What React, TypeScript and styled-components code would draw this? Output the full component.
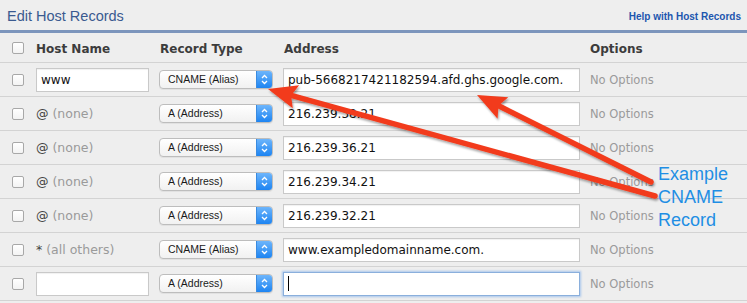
import React from 'react';
import styled, { createGlobalStyle } from 'styled-components';

const GlobalStyle = createGlobalStyle`
    body {
        margin: 0;
        background: #eeeeee;
        font-family: "DejaVu Sans", Verdana, sans-serif;
    }
`;

const Panel = styled.div`
    position: relative;
    width: 747px;
    height: 303px;
    overflow: hidden;
    background: #eeeeee;
`;
const TitleBar = styled.div`
    display: flex;
    align-items: center;
    justify-content: space-between;
    height: 30px;
    padding: 0 6px 0 7px;
    border-bottom: 3px solid #7c95bc;
`;
const Title = styled.span`
    font-family: "Liberation Sans", Arial, sans-serif;
    font-size: 14.5px;
    color: #3a5a90;
    padding-top: 1px;
`;
const HelpLink = styled.a`
    font-family: "Liberation Sans", Arial, sans-serif;
    font-size: 10px;
    font-weight: bold;
    color: #1d56ae;
    text-decoration: none;
    padding-top: 3px;
`;
const Row = styled.div<{ $head?: boolean }>`
    display: grid;
    grid-template-columns: 24px 123px 124px 307px 1fr;
    align-items: center;
    height: ${(p) => (p.$head ? '29px' : '33px')};
    padding-left: 12px;
    border-bottom: 1px solid #d3d3d3;
`;
const HeadCell = styled.span`
    font-size: 12px;
    font-weight: bold;
    color: #3c3c3c;
    padding-top: 2px;
`;
const Check = styled.span`
    display: block;
    width: 10px;
    height: 10px;
    border: 1px solid #a8a8a8;
    border-radius: 2px;
    background: linear-gradient(#ffffff, #f3f3f3);
`;
const Field = styled.div<{ $width: number; $focus?: boolean }>`
    box-sizing: border-box;
    width: ${(p) => p.$width}px;
    height: 24px;
    display: flex;
    align-items: center;
    padding-left: 4px;
    background: #fff;
    border: 1px solid ${(p) => (p.$focus ? '#8aafdc' : '#c9c9c9')};
    box-shadow: ${(p) => (p.$focus ? '0 0 2px 1px #a9c6ec' : 'inset 0 1px 1px rgba(0,0,0,0.06)')};
    font-size: 12px;
    color: #111;
    white-space: nowrap;
    overflow: hidden;
`;
const Caret = styled.span`
    width: 1px;
    height: 15px;
    background: #000;
`;
const HostText = styled.span`
    font-size: 12.5px;
    color: #444;
`;
const Muted = styled.span`
    color: #9a9a9a;
`;
const Select = styled.div`
    box-sizing: border-box;
    width: 114px;
    height: 19px;
    display: flex;
    align-items: center;
    justify-content: space-between;
    border: 1px solid #bdbdbd;
    border-radius: 4px;
    background: linear-gradient(#ffffff, #f1f1f1);
    box-shadow: 0 1px 0 rgba(0, 0, 0, 0.05);
    overflow: hidden;
    font-family: "Liberation Sans", Arial, sans-serif;
    font-size: 10.5px;
    color: #1a1a1a;
`;
const SelectLabel = styled.span`
    padding-left: 8px;
    padding-bottom: 1px;
`;
const SelectButton = styled.span`
    width: 15px;
    height: 100%;
    display: flex;
    align-items: center;
    justify-content: center;
    background: linear-gradient(#6db5fb, #1d84f2);
    border-left: 1px solid #3a8be0;
`;
const Options = styled.span`
    font-size: 11.5px;
    color: #9a9a9a;
    padding-top: 1px;
`;
const Overlay = styled.svg`
    position: absolute;
    left: 0;
    top: 0;
    pointer-events: none;
`;
const Note = styled.div`
    position: absolute;
    left: 658px;
    top: 163px;
    font-family: "Liberation Sans", Arial, sans-serif;
    font-size: 18px;
    line-height: 23px;
    color: #1f8ee4;
`;

interface IRecord {
    host: React.ReactNode;
    type: string;
    address: string;
}

const records: IRecord[] = [
    { host: <Field $width={113}>www</Field>, type: 'CNAME (Alias)', address: 'pub-5668217421182594.afd.ghs.google.com.' },
    { host: <HostText>@ <Muted>(none)</Muted></HostText>, type: 'A (Address)', address: '216.239.38.21' },
    { host: <HostText>@ <Muted>(none)</Muted></HostText>, type: 'A (Address)', address: '216.239.36.21' },
    { host: <HostText>@ <Muted>(none)</Muted></HostText>, type: 'A (Address)', address: '216.239.34.21' },
    { host: <HostText>@ <Muted>(none)</Muted></HostText>, type: 'A (Address)', address: '216.239.32.21' },
    { host: <HostText>* <Muted>(all others)</Muted></HostText>, type: 'CNAME (Alias)', address: 'www.exampledomainname.com.' },
];

function Chevrons() {
    return (
        <svg width="7" height="11" viewBox="0 0 7 11">
            <path d="M1 4 L3.5 1.5 L6 4 M1 7 L3.5 9.5 L6 7" fill="none" stroke="#fff" strokeWidth="1.3" />
        </svg>
    );
}

function TypeSelect({ label }: { label: string }) {
    return (
        <Select>
            <SelectLabel>{label}</SelectLabel>
            <SelectButton>
                <Chevrons />
            </SelectButton>
        </Select>
    );
}

// arrow drawn from tail to tip, head built along the line direction
function Arrow({ from, to }: { from: [number, number]; to: [number, number] }) {
    const dx = to[0] - from[0];
    const dy = to[1] - from[1];
    const len = Math.hypot(dx, dy);
    const ux = dx / len;
    const uy = dy / len;
    const nx = -uy;
    const ny = ux;
    const L = 29;
    const W = 12;
    const bx = to[0] - ux * L;
    const by = to[1] - uy * L;
    const head = [
        [to[0], to[1]],
        [bx + nx * W, by + ny * W],
        [bx + ux * 5, by + uy * 5],
        [bx - nx * W, by - ny * W],
    ]
        .map((p) => p.join(','))
        .join(' ');
    return (
        <g>
            <line x1={from[0]} y1={from[1]} x2={bx + ux * 6} y2={by + uy * 6} stroke="#f23b1c" strokeWidth="5.5" strokeLinecap="round" />
            <polygon points={head} fill="#f23b1c" />
        </g>
    );
}

function App() {
    return (
        <>
            <GlobalStyle />
            <Panel>
                <TitleBar>
                    <Title>Edit Host Records</Title>
                    <HelpLink href="#">Help with Host Records</HelpLink>
                </TitleBar>
                <Row $head>
                    <Check />
                    <HeadCell>Host Name</HeadCell>
                    <HeadCell style={{ paddingLeft: 1 }}>Record Type</HeadCell>
                    <HeadCell style={{ paddingLeft: 1 }}>Address</HeadCell>
                    <HeadCell>Options</HeadCell>
                </Row>
                {records.map((r, i) => (
                    <Row key={i}>
                        <Check />
                        {r.host}
                        <TypeSelect label={r.type} />
                        <Field $width={297}>{r.address}</Field>
                        <Options>No Options</Options>
                    </Row>
                ))}
                <Row>
                    <Check />
                    <Field $width={113} />
                    <TypeSelect label="A (Address)" />
                    <Field $width={297} $focus>
                        <Caret />
                    </Field>
                    <Options>No Options</Options>
                </Row>
                <Overlay width="747" height="303">
                    <defs>
                        <filter id="shade" x="-10%" y="-10%" width="120%" height="130%">
                            <feDropShadow dx="1" dy="2" stdDeviation="1.2" floodColor="#000" floodOpacity="0.35" />
                        </filter>
                    </defs>
                    <g filter="url(#shade)">
                        <Arrow from={[655, 196]} to={[268, 89]} />
                        <Arrow from={[651, 182]} to={[477, 95]} />
                    </g>
                </Overlay>
                <Note>
                    Example
                    <br />
                    CNAME
                    <br />
                    Record
                </Note>
            </Panel>
        </>
    );
}

export default App;
